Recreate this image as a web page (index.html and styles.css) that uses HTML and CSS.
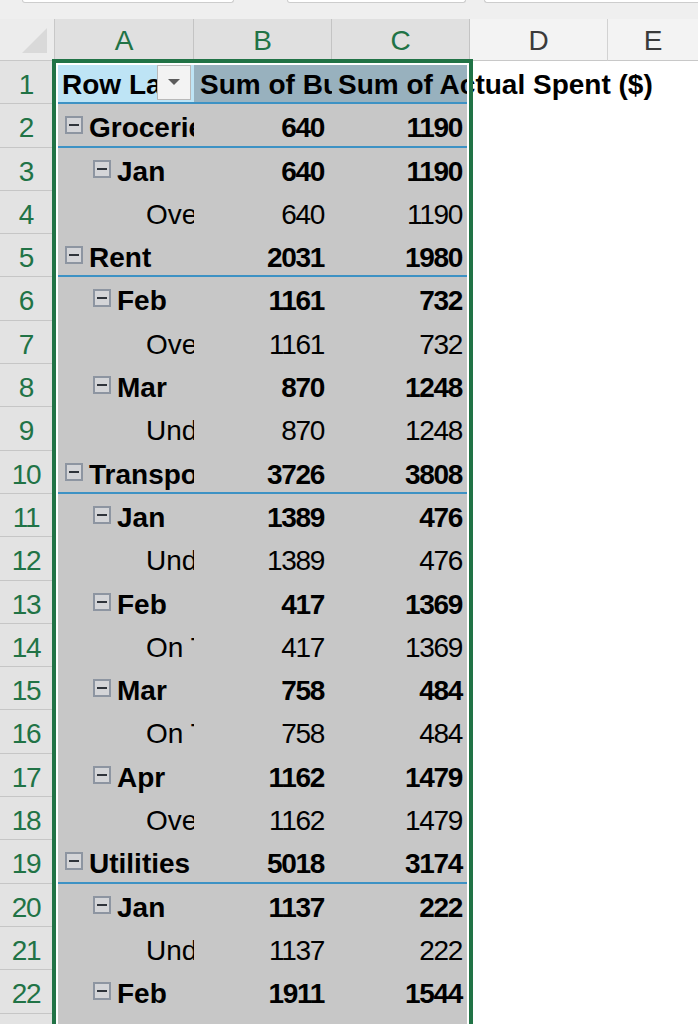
FILE: index.html
```html
<!DOCTYPE html>
<html>
<head>
<meta charset="utf-8">
<link rel="stylesheet" href="styles.css">
</head>
<body>
<div class="topbar">
  <div class="fbox namebox"></div>
  <div class="fbox midbox"></div>
  <div class="fbox formulabox"></div>
</div>
<div class="sheet">
  <div class="colhead">
    <div class="corner"><svg class="tri" width="54" height="41" viewBox="0 0 54 41"><polygon points="47,9 47,34 22,34" fill="#d9d9d9"/></svg></div>
    <div class="ch sel w139">A</div>
    <div class="ch sel w138">B</div>
    <div class="ch sel w138">C</div>
    <div class="ch w138">D</div>
    <div class="ch last">E</div>
  </div>
  <div class="grid">
    <div class="rh">1</div>
    <div class="c hdA cat"><span class="lbl">Row Labels</span><span class="dd"><svg width="12" height="7" viewBox="0 0 12 7"><polygon points="0,0 12,0 6,6" fill="#5c5c5c"/></svg></span></div>
    <div class="c hdB cat">Sum of Budget ($)</div>
    <div class="c hdC cat">Sum of Actual Spent ($)</div>

    <div class="rh">2</div>
    <div class="c b l1 cat"><span class="tg"></span>Groceries</div>
    <div class="c n b cat">640</div>
    <div class="c n b cat">1190</div>

    <div class="rh">3</div>
    <div class="c b l2"><span class="tg"></span>Jan</div>
    <div class="c n b">640</div>
    <div class="c n b">1190</div>

    <div class="rh">4</div>
    <div class="c l3">Over Budget</div>
    <div class="c n">640</div>
    <div class="c n">1190</div>

    <div class="rh">5</div>
    <div class="c b l1 cat"><span class="tg"></span>Rent</div>
    <div class="c n b cat">2031</div>
    <div class="c n b cat">1980</div>

    <div class="rh">6</div>
    <div class="c b l2"><span class="tg"></span>Feb</div>
    <div class="c n b">1161</div>
    <div class="c n b">732</div>

    <div class="rh">7</div>
    <div class="c l3">Over Budget</div>
    <div class="c n">1161</div>
    <div class="c n">732</div>

    <div class="rh">8</div>
    <div class="c b l2"><span class="tg"></span>Mar</div>
    <div class="c n b">870</div>
    <div class="c n b">1248</div>

    <div class="rh">9</div>
    <div class="c l3">Under Budget</div>
    <div class="c n">870</div>
    <div class="c n">1248</div>

    <div class="rh">10</div>
    <div class="c b l1 cat"><span class="tg"></span>Transportation</div>
    <div class="c n b cat">3726</div>
    <div class="c n b cat">3808</div>

    <div class="rh">11</div>
    <div class="c b l2"><span class="tg"></span>Jan</div>
    <div class="c n b">1389</div>
    <div class="c n b">476</div>

    <div class="rh">12</div>
    <div class="c l3">Under Budget</div>
    <div class="c n">1389</div>
    <div class="c n">476</div>

    <div class="rh">13</div>
    <div class="c b l2"><span class="tg"></span>Feb</div>
    <div class="c n b">417</div>
    <div class="c n b">1369</div>

    <div class="rh">14</div>
    <div class="c l3">On Track</div>
    <div class="c n">417</div>
    <div class="c n">1369</div>

    <div class="rh">15</div>
    <div class="c b l2"><span class="tg"></span>Mar</div>
    <div class="c n b">758</div>
    <div class="c n b">484</div>

    <div class="rh">16</div>
    <div class="c l3">On Track</div>
    <div class="c n">758</div>
    <div class="c n">484</div>

    <div class="rh">17</div>
    <div class="c b l2"><span class="tg"></span>Apr</div>
    <div class="c n b">1162</div>
    <div class="c n b">1479</div>

    <div class="rh">18</div>
    <div class="c l3">Over Budget</div>
    <div class="c n">1162</div>
    <div class="c n">1479</div>

    <div class="rh">19</div>
    <div class="c b l1 cat"><span class="tg"></span>Utilities</div>
    <div class="c n b cat">5018</div>
    <div class="c n b cat">3174</div>

    <div class="rh">20</div>
    <div class="c b l2"><span class="tg"></span>Jan</div>
    <div class="c n b">1137</div>
    <div class="c n b">222</div>

    <div class="rh">21</div>
    <div class="c l3">Under Budget</div>
    <div class="c n">1137</div>
    <div class="c n">222</div>

    <div class="rh">22</div>
    <div class="c b l2"><span class="tg"></span>Feb</div>
    <div class="c n b">1911</div>
    <div class="c n b">1544</div>

    <div class="rh"></div>
    <div class="c"></div>
    <div class="c"></div>
    <div class="c"></div>
  </div>
  <div class="selbox"></div>
</div>
</body>
</html>
```
FILE: styles.css
```css
html, body {
  margin: 0;
  padding: 0;
  overflow: hidden;
  background: #fff;
}
body {
  width: 698px;
  height: 1024px;
  font-family: "Liberation Sans", Arial, sans-serif;
  font-size: 28px;
  color: #000;
}

/* top strip (name box / formula bar edges) */
.topbar {
  display: flex;
  height: 19px;
  background: #efefef;
}
.fbox {
  height: 2px;
  background: #fff;
  border: 1px solid #cdcdcd;
  border-top: none;
  border-radius: 0 0 4px 4px;
}
.namebox { margin-left: 22px; width: 210px; }
.midbox { margin-left: 53px; width: 177px; }
.formulabox { margin-left: 18px; flex: 1; border-right: none; border-radius: 0 0 0 4px; }

.sheet { position: relative; }

/* column headers */
.colhead {
  display: flex;
  height: 42px;
}
.corner {
  flex: none;
  width: 55px;
  height: 42px;
  box-sizing: border-box;
  background: #ececec;
  border-right: 1px solid #c8c8c8;
  border-bottom: 1px solid #c8c8c8;
}
.tri { display: block; }
.ch {
  flex: none;
  box-sizing: border-box;
  height: 42px;
  padding-top: 1px;
  line-height: 42px;
  text-align: center;
  overflow: hidden;
  background: #f3f3f3;
  color: #3a3a3a;
  border-right: 1px solid #d2d2d2;
  border-bottom: 1px solid #c8c8c8;
}
.ch.sel {
  background: #e0e0e0;
  color: #217346;
  border-right-color: #c4c4c4;
}
.w139 { width: 139px; }
.w138 { width: 138px; }
.ch.last { flex: 1; border-right: none; }

/* grid body */
.grid {
  display: grid;
  grid-template-columns: 55px 139px 138px 138px;
  grid-auto-rows: 43.3px;
}
.rh {
  box-sizing: border-box;
  background: #e3e3e3;
  border-bottom: 1px solid #c6c6c6;
  color: #217346;
  text-align: center;
  padding: 3px 3px 0 0;
  line-height: 42px;
  overflow: hidden;
  letter-spacing: -1.3px;
}
.c {
  box-sizing: border-box;
  background: #c7c7c7;
  padding: 3px 7px 0;
  line-height: 42px;
  white-space: nowrap;
  overflow: hidden;
}
.n {
  text-align: right;
  padding-right: 8px;
  letter-spacing: -1.3px;
}
.b { font-weight: bold; }
.cat { box-shadow: inset 0 -2px 0 #3d92c4; }

.l1 { padding-left: 10px; }
.l2 { padding-left: 38px; }
.l3 { padding-left: 91px; }

.tg {
  display: inline-block;
  width: 18px;
  height: 18px;
  box-sizing: border-box;
  border: 2px solid #8d95a1;
  background: linear-gradient(#2f343b, #2f343b) center / 10px 2px no-repeat, #d4d5d8;
  vertical-align: 3px;
  margin-right: 6px;
}

/* pivot header row */
.hdA {
  display: flex;
  background: #bee4f5;
  padding-right: 3px;
}
.lbl {
  flex: 1;
  min-width: 0;
  overflow: hidden;
  font-weight: bold;
}
.dd {
  flex: none;
  align-self: center;
  margin-top: -3px;
  width: 34px;
  height: 35px;
  box-sizing: border-box;
  border: 1px solid #b9b9b9;
  background: #f3f3f3;
  display: flex;
  align-items: center;
  justify-content: center;
}
.hdB, .hdC {
  background: #98b1be;
  font-weight: bold;
  padding-left: 6px;
}
.hdC { overflow: visible; }

/* selection outline overlay */
.selbox {
  position: absolute;
  left: 52px;
  top: 40px;
  width: 421px;
  height: 1000px;
  box-sizing: border-box;
  border: 4px solid #217346;
  box-shadow: inset 0 0 0 2px #fff;
  pointer-events: none;
}
```
